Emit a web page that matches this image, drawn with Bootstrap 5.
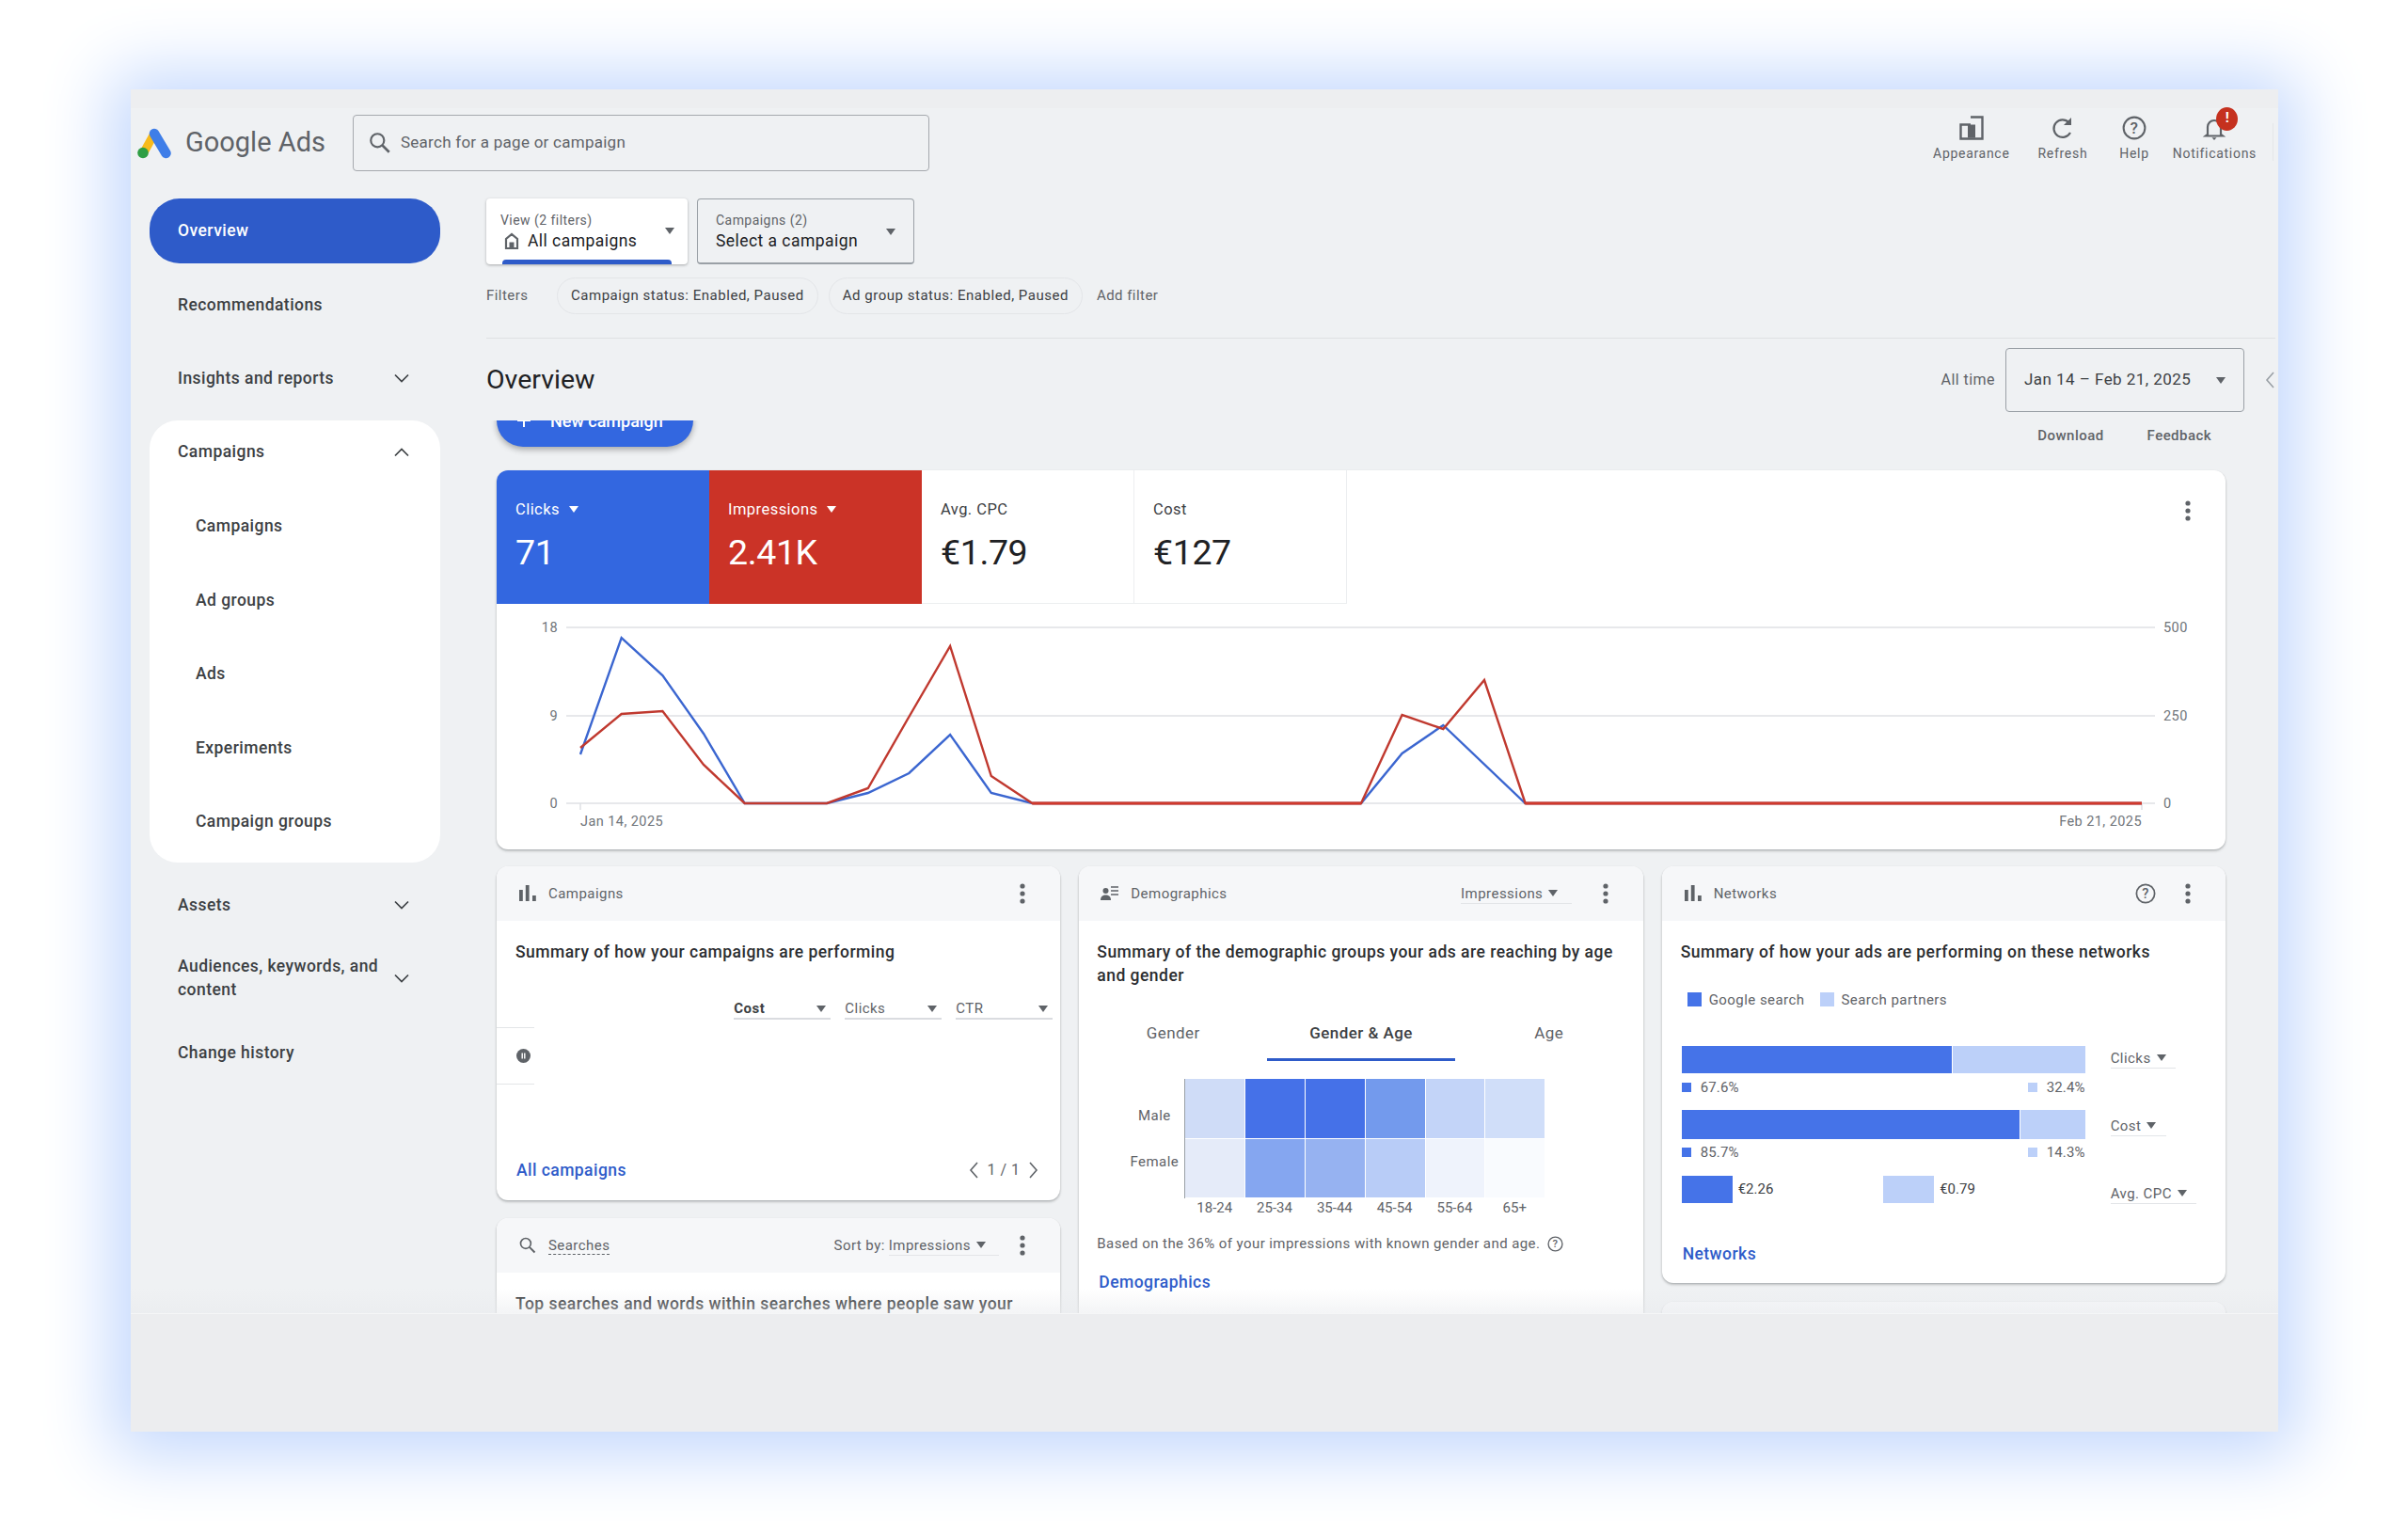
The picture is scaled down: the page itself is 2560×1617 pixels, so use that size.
<!DOCTYPE html>
<html lang="en">
<head>
<meta charset="utf-8">
<title>Google Ads Overview</title>
<link href="https://cdn.jsdelivr.net/npm/bootstrap@5.3.0/dist/css/bootstrap.min.css" rel="stylesheet">
<style>
html,body{margin:0;background:#fff;width:2560px;height:1617px;overflow:hidden}
body{font-family:Roboto,"Liberation Sans",sans-serif;color:#3c4043;letter-spacing:.03em;font-size:15px}
.gframe{width:2283px;height:1427px;margin:95px 0 0 139px;background:#eff1f3;box-shadow:0 4px 70px 20px #c2d7fd;display:flex;flex-direction:column;overflow:hidden}
.gupper{height:1301px;display:flex;flex-direction:column;position:relative;overflow:hidden}
.glower{height:126px;background:#ecedef;border-top:1px solid #f5f6f7}
.gband{height:20px;background:#edeef0;flex:none}
.ghead{height:92px;flex:none;padding:7px 0 0 7px}
.gheadrow{height:60px}
.glogo{width:36px;height:33px}
.gbrand{font-size:29px;color:#5f6368;margin-left:15px;width:178px;letter-spacing:0}
.gsearch{width:613px;height:60px;border:1px solid #a6a9ae;border-radius:4px;padding-left:15px;color:#5f6368;font-size:17px;letter-spacing:.015em}
.gsearch svg{width:26px;height:26px;margin-right:9px}
.gtools{padding-right:5px;align-self:flex-start;margin-top:1px}
.gtool{position:relative;font-size:14px;color:#5f6368;line-height:20px;text-align:center;white-space:nowrap;letter-spacing:.05em}
.gtool svg{display:block;width:26px;height:26px;margin:0 auto 4px}
.gbadge{position:absolute;left:50%;top:-9px;margin-left:2px;width:23px;height:25px;border-radius:50%;background:#c5311f;color:#fff;font-size:15px;font-weight:700;line-height:23px;letter-spacing:0}
.gsep{width:1px;height:40px;background:#e4e6e8;margin-left:17px;margin-top:8px}
.gcols{height:1189px;flex:none}
.gside{width:378px;flex:none;padding:0 49px 0 20px;margin-top:-1px}
.navln{height:78.5px;padding:0 30px;display:flex;align-items:center;justify-content:space-between;font-size:17.5px;font-weight:500;color:#3c4043}
.navln svg{width:20px;height:20px;flex:none;margin-right:1px}
.navact{height:69px;margin:4.75px 0;background:#2e5bc9;color:#fff;border-radius:32px}
.navgroup{background:#fff;border-radius:30px;margin:5px 0 5.5px;padding-bottom:4.5px}
.navtop{height:68px;margin-bottom:5.5px}
.navsub{padding-left:49px}
.navtwo{line-height:25px}
.gmain{width:1905px;flex:none;display:flex;flex-direction:column;min-height:0}
.gpick{height:70px;padding:12px 14px 0 15px;position:relative;font-size:17.5px;color:#202124;line-height:22px;flex:none}
.gpick small{display:block;font-size:14px;color:#5f6368;line-height:22px}
.gpick1{width:214px;background:#fff;border-radius:4px;box-shadow:0 1px 3px rgba(0,0,0,.3)}
.gpick1:after{content:"";position:absolute;left:17px;right:17px;bottom:0;height:5px;background:#2e5bc9;border-radius:4px 4px 0 0}
.gpick1 svg{margin-left:3px}
.gpick2{width:231px;border:1px solid #9aa0a6;border-bottom-width:2px;border-radius:4px;padding-left:19px;padding-top:11px}
.gpicks{margin-top:4px;gap:10px}
.gpick .tridn{position:absolute;right:14px;top:31px}
.gpick2 .tridn{right:19px!important}
.tridn{display:inline-block;width:0;height:0;border-left:5.5px solid transparent;border-right:5.5px solid transparent;border-top:7px solid #5f6368;flex:none}
.gfilters{height:39px;margin-top:14px;font-size:15px;color:#5f6368;gap:11px;flex:none}
.gchip{height:39px;padding:0 14px;display:flex;align-items:center;border:1px solid #e3e5e8;border-radius:20px;color:#3c4043;white-space:nowrap;letter-spacing:.035em}
.gfilters .gfl{width:64px}
.gaddf{margin-left:4px}
.gdiv{height:1px;background:#dfe1e4;margin-top:25px;width:1902px;flex:none}
.gtitle{height:87px;padding-top:10px;flex:none}
.gtitle h1{font-size:28.5px;font-weight:400;color:#202124;margin:0;line-height:68px;letter-spacing:0}
.galltime{font-size:16px;color:#5f6368;margin-right:11px;line-height:68px}
.gdate{width:254px;height:68px;border:1px solid #9aa0a6;border-radius:4px;padding:0 19px;font-size:17px;color:#3c4043}
.gcoll{width:36px;height:68px;padding-left:20px}
.gcoll svg{width:14px;height:20px}
.gscroll{flex:1;min-height:0;overflow:hidden;padding:0 56px 0 11px}
.gact{height:53px;flex:none}
.gnewbtn{width:209px;height:56px;margin-top:-28px;border-radius:28px;background:#3367e0;color:#fff;border:0;font-size:18px;font-weight:500;box-shadow:0 3px 6px rgba(0,0,0,.3);padding:0 0 0 22px;display:flex;align-items:center;gap:21px}
.glinks{padding:6px 15px 0 0;gap:46px;font-size:15px;line-height:20px;color:#5f6368;font-weight:500}
.gcard{border:0;border-radius:12px;box-shadow:0 1px 2px rgba(60,64,67,.22),0 2px 3px rgba(60,64,67,.2);overflow:hidden;background:#fff}
.gchart{height:403px;margin-bottom:18px}
.gtile{width:226px;height:142px;padding:32px 0 0 20px;font-size:16.5px;line-height:20px;color:#3c4043;border-right:1px solid #eceef0;border-bottom:1px solid #eceef0}
.gtile b{display:block;font-weight:400;font-size:37.5px;line-height:46px;margin-top:12px;color:#202124;letter-spacing:-.01em}
.gtblue{background:#3367e0;color:#fff;border:0}
.gtred{background:#cb3327;color:#fff;border:0}
.gtblue b,.gtred b{color:#fff}
.gtile .tridn{border-top-color:#fff;margin-left:10px;vertical-align:2px}
.gdots{width:6px;height:24px;flex:none;color:#5f6368}
.gtopdots{margin:31px 37px 0 auto}
.gsvg{display:block}
.gsvg text{font-family:Roboto,"Liberation Sans",sans-serif;font-size:14.5px;fill:#70757a;letter-spacing:.03em}
.gtri{gap:20px}
.gcolm{flex:1 1 0;min-width:0}
.card-header.ghd{height:58px;background:#f6f7f9;border:0;padding:0 37px 0 23px;display:flex;align-items:center;font-size:15px;color:#5f6368;border-radius:0}
.ghd .gic{width:20px;height:20px;margin-right:12px;flex:none}
.gsumm{font-size:17.5px;line-height:25px;font-weight:500;color:#2b2d30;padding:21px 15px 0 20px;letter-spacing:.027em}
.gsel{justify-content:flex-end;gap:15px;padding-right:8px;margin-top:38px;font-size:15px}
.gsel>div{width:103px;height:21px;border-bottom:2px solid #dadce0;display:flex;justify-content:space-between;align-items:center;padding-right:5px;color:#5f6368}
.gsel>div.on{font-weight:700;color:#3c4043}
.gcamprow{width:40px;height:61px;border-top:1px solid #e3e5e8;border-bottom:1px solid #e3e5e8;margin-top:8px;display:flex;align-items:center;padding-left:21px}
.gcamprow svg{width:15px;height:15px}
.gfoot{margin-top:auto;padding:0 22px 20px 21px;line-height:24px}
.glink{font-size:17.5px;font-weight:500;color:#2e5bc9;text-decoration:none}
.gpager{font-size:16px;color:#5f6368;gap:9px}
.gpager svg{width:12px;height:20px}
.gcamps{height:355px}
.gsearches{height:120px;margin-top:19px}
.gdash{border-bottom:1px dashed #5f6368;line-height:18px}
.gddl{height:22px;border-bottom:1px solid #e3e5e8;display:inline-flex;align-items:center;gap:6px;color:#5f6368;font-size:15px;line-height:20px;white-space:nowrap}
.gdemo{height:490px}
.gtabbar{margin-top:20px;height:58px}
.gtabbar>div{flex:1 1 0;text-align:center;font-size:17px;padding-top:16px;line-height:24px;color:#5f6368;border-bottom:3px solid transparent}
.gtabbar>div.on{border-bottom-color:#2e5bc9;color:#3c4043;font-weight:500}
.gheat{margin-top:19px}
.gylab{margin-left:48px;width:64px;text-align:center;font-size:15px;line-height:20px;color:#5f6368;flex:none}
.gylab div{margin-top:29px}
.gcells{display:grid;grid-template-columns:repeat(6,63.8px);grid-template-rows:63.5px 63.5px;border-left:1px solid #9aa0a6}
.gcells div{border:solid #fff;border-width:0 1px 1px 0}
.gxlab{display:grid;grid-template-columns:repeat(6,63.8px);margin-left:112px;font-size:15px;line-height:20px;text-align:center;color:#5f6368;letter-spacing:0}
.gnote{margin:18px 0 0 19px;font-size:15px;line-height:20px;color:#5f6368;display:flex;align-items:center;gap:8px;white-space:nowrap;letter-spacing:.028em}
.gnote svg{width:17px;height:17px}
.gdlink{margin:19px 0 0 21px;line-height:24px}
.gnets{height:443px}
.gnext{height:70px;margin-top:20px}
.glegend{margin:28px 0 0 27px;height:20px;font-size:15px;color:#5f6368;line-height:20px}
.gsq{display:inline-block;width:15px;height:15px;background:#4573e8;margin-right:8px;vertical-align:-2px}
.gsq2{background:#bcd0f9}
.glegend span+span{margin-left:16px}
.gbars{padding:0 0 0 21px;margin-top:39px}
.gbarsl{width:429px;flex:none}
.gstack{display:flex}
.gstack div:first-child{background:#4573e8}
.gstack div:last-child{background:#bcd0f9;flex:1;margin-left:1px}
.gpcts{display:flex;justify-content:space-between;font-size:15px;line-height:20px;color:#5f6368;letter-spacing:.01em}
.gmini{display:inline-block;width:10px;height:10px;background:#4573e8;margin-right:10px}
.gmini2{background:#bcd0f9}
.gddr{margin-left:27px}
.gcpc{flex:1 1 0;display:flex;align-items:center;gap:6px;font-size:15px;color:#3c4043;letter-spacing:0}
.gcpc i{display:block;width:54px;height:29px;background:#4573e8}
.gcpc i.gl{background:#bcd0f9}
.gnlink{margin:41px 0 0 22px;line-height:24px}
.gveil{position:absolute;left:0;right:0;bottom:0;height:26px;background:linear-gradient(rgba(232,234,237,0),rgba(232,234,237,.5));pointer-events:none}
</style>
</head>
<body>
<svg class="d-none" xmlns="http://www.w3.org/2000/svg">
<symbol id="i-search" viewBox="0 0 24 24"><circle cx="9.5" cy="9.5" r="6.5" fill="none" stroke="currentColor" stroke-width="2"/><path d="M14.3 14.3 21 21" stroke="currentColor" stroke-width="2.4" fill="none"/></symbol>
<symbol id="i-dots" viewBox="0 0 6 24"><circle cx="3" cy="4" r="2.6" fill="currentColor"/><circle cx="3" cy="12" r="2.6" fill="currentColor"/><circle cx="3" cy="20" r="2.6" fill="currentColor"/></symbol>
<symbol id="i-bars" viewBox="0 0 20 20"><path d="M1 6h3.800v12H1zM7.800 1h3.800v17H7.800zM15 12h3.800v6H15z" fill="currentColor"/></symbol>
<symbol id="i-dn" viewBox="0 0 20 20"><path d="M3 6.5l7 7 7-7" fill="none" stroke="currentColor" stroke-width="1.7"/></symbol>
<symbol id="i-up" viewBox="0 0 20 20"><path d="M3 13.5l7-7 7 7" fill="none" stroke="currentColor" stroke-width="1.7"/></symbol>
<symbol id="i-help" viewBox="0 0 24 24"><circle cx="12" cy="12" r="10.5" fill="none" stroke="currentColor" stroke-width="1.9"/><text x="12" y="17.6" text-anchor="middle" font-family="Roboto,sans-serif" font-size="16" font-weight="500" fill="currentColor">?</text></symbol>
<symbol id="i-lt" viewBox="0 0 12 20"><path d="M10 2 3 10l7 8" fill="none" stroke="currentColor" stroke-width="1.6"/></symbol>
<symbol id="i-rt" viewBox="0 0 12 20"><path d="M2 2l7 8-7 8" fill="none" stroke="currentColor" stroke-width="1.6"/></symbol>
</svg>

<div class="gframe">
 <div class="gupper">
  <div class="gband"></div>
  <header class="ghead">
   <div class="d-flex align-items-center gheadrow">
    <svg class="glogo" viewBox="0 0 36 33"><path d="M18 6 7 26" stroke="#f8bb1c" stroke-width="9" stroke-linecap="round" fill="none"/><path d="M18 6 30.500 27" stroke="#3f7ee8" stroke-width="10.500" stroke-linecap="round" fill="none"/><circle cx="6" cy="26.500" r="5.800" fill="#2f9e44"/></svg>
    <span class="gbrand">Google Ads</span>
    <div class="gsearch d-flex align-items-center"><svg><use href="#i-search"/></svg>Search for a page or campaign</div>
    <div class="ms-auto d-flex gtools">
     <div class="gtool"><svg viewBox="0 0 26 26"><path d="M12 1.500h12.500v23H1.500V9.500H12" fill="none" stroke="#5f6368" stroke-width="2.400"/><path d="M9 9.500h8v14H9z" fill="#5f6368"/></svg>Appearance</div>
     <div class="gtool" style="margin-left:30px"><svg viewBox="0 0 26 26"><path d="M19.500 7.200A9.300 9.300 0 1 0 21 18" fill="none" stroke="#5f6368" stroke-width="2.200"/><path d="M22 2v8h-8z" fill="#5f6368"/></svg>Refresh</div>
     <div class="gtool" style="margin-left:34px"><svg><use href="#i-help"/></svg>Help</div>
     <div class="gtool" style="margin-left:25px"><svg viewBox="0 0 26 26"><path d="M6 20V12a7 7 0 0 1 14 0v8l2 1.500H4z" fill="none" stroke="#5f6368" stroke-width="2.200"/><path d="M10.500 23.200h5L13 26z" fill="#5f6368"/></svg><span class="gbadge">!</span>Notifications</div>
     <div class="gsep"></div>
    </div>
   </div>
  </header>
  <div class="d-flex gcols">
   <nav class="gside">
    <div class="navln navact">Overview</div>
    <div class="navln">Recommendations</div>
    <div class="navln">Insights and reports<svg><use href="#i-dn"/></svg></div>
    <div class="navgroup">
     <div class="navln navtop">Campaigns<svg><use href="#i-up"/></svg></div>
     <div class="navln navsub">Campaigns</div>
     <div class="navln navsub">Ad groups</div>
     <div class="navln navsub">Ads</div>
     <div class="navln navsub">Experiments</div>
     <div class="navln navsub">Campaign groups</div>
    </div>
    <div class="navln">Assets<svg><use href="#i-dn"/></svg></div>
    <div class="navln navtwo"><span>Audiences, keywords, and<br>content</span><svg><use href="#i-dn"/></svg></div>
    <div class="navln">Change history</div>
   </nav>
   <main class="gmain">
    <div class="d-flex gpicks">
     <div class="gpick gpick1"><small>View (2 filters)</small><span class="d-flex align-items-center gap-2"><svg width="18" height="22" viewBox="-1 -2 18 22"><path d="M2 17V7l6-5 6 5v10z" fill="none" stroke="#5f6368" stroke-width="2.200"/><path d="M5.500 10.500h5V17h-5z" fill="#5f6368"/></svg>All campaigns</span><span class="tridn"></span></div>
     <div class="gpick gpick2"><small>Campaigns (2)</small>Select a campaign<span class="tridn"></span></div>
    </div>
    <div class="d-flex align-items-center gfilters">
     <span class="gfl">Filters</span>
     <span class="gchip">Campaign status: Enabled, Paused</span>
     <span class="gchip">Ad group status: Enabled, Paused</span>
     <span class="gaddf">Add filter</span>
    </div>
    <div class="gdiv"></div>
    <div class="d-flex gtitle">
     <h1>Overview</h1>
     <span class="galltime ms-auto">All time</span>
     <div class="gdate d-flex align-items-center justify-content-between">Jan 14 – Feb 21, 2025<span class="tridn"></span></div>
     <div class="gcoll d-flex align-items-center"><svg style="color:#9aa0a6"><use href="#i-lt"/></svg></div>
    </div>
    <div class="gscroll">
     <div class="d-flex justify-content-between gact">
      <button class="gnewbtn"><svg width="14" height="14" viewBox="0 0 14 14"><path d="M7 0v14M0 7h14" stroke="#fff" stroke-width="2"/></svg>New campaign</button>
      <div class="d-flex glinks"><span>Download</span><span>Feedback</span></div>
     </div>
     <section class="card gcard gchart">
      <div class="d-flex">
       <div class="gtile gtblue">Clicks<span class="tridn"></span><b>71</b></div>
       <div class="gtile gtred">Impressions<span class="tridn"></span><b>2.41K</b></div>
       <div class="gtile">Avg. CPC<b>€1.79</b></div>
       <div class="gtile">Cost<b>€127</b></div>
       <svg class="gdots gtopdots"><use href="#i-dots"/></svg>
      </div>
      <svg class="gsvg" width="1838" height="261" viewBox="0 0 1838 261">
       <g stroke="#dfe1e5" stroke-width="1.5"><path d="M74 25H1763M74 119H1763M74 212H1763M89 212v7M1749 212v7"/></g>
       <text x="65" y="30" text-anchor="end">18</text><text x="65" y="124" text-anchor="end">9</text><text x="65" y="217" text-anchor="end">0</text>
       <text x="1772" y="30">500</text><text x="1772" y="124">250</text><text x="1772" y="217">0</text>
       <text x="89" y="236">Jan 14, 2025</text><text x="1749" y="236" text-anchor="end">Feb 21, 2025</text>
       <polyline fill="none" stroke="#3b66d0" stroke-width="2.4" points="89,160 132.7,36 176.4,76 220,138 263.7,212 351.1,212 394.8,201 438.4,180 482.1,139 525.8,201 569.5,212 919,212 962.6,159 1006.3,129 1093.6,212 1749,212"/>
       <polyline fill="none" stroke="#c0392f" stroke-width="2.4" points="89,153 132.7,117 176.4,114 220,171 263.7,212 351.1,212 394.8,196 438.4,120 482.1,45 525.8,183 569.5,212 919,212 962.6,118 1006.3,133 1050,81 1093.6,212 1749,212"/>
       <path d="M569.5 212H919M1093.6 212H1749" stroke="#d0392c" stroke-width="3"/>
      </svg>
     </section>
     <div class="d-flex gtri">
      <div class="gcolm">
       <section class="card gcard gcamps">
        <div class="card-header ghd"><svg class="gic"><use href="#i-bars"/></svg>Campaigns<svg class="gdots ms-auto"><use href="#i-dots"/></svg></div>
        <div class="gsumm">Summary of how your campaigns are performing</div>
        <div class="d-flex gsel"><div class="on">Cost<span class="tridn"></span></div><div>Clicks<span class="tridn"></span></div><div>CTR<span class="tridn"></span></div></div>
        <div class="gcamprow"><svg viewBox="0 0 15 15"><circle cx="7.5" cy="7.5" r="7.5" fill="#5f6368"/><path d="M5.5 4.5h1.4v6H5.5zM8.1 4.5h1.4v6H8.1z" fill="#fff"/></svg></div>
        <div class="d-flex justify-content-between align-items-center gfoot"><a class="glink" href="#">All campaigns</a><span class="d-flex align-items-center gpager"><svg><use href="#i-lt"/></svg>1 / 1<svg><use href="#i-rt"/></svg></span></div>
       </section>
       <section class="card gcard gsearches">
        <div class="card-header ghd"><svg class="gic"><use href="#i-search"/></svg><span class="gdash">Searches</span><span class="ms-auto me-1">Sort by:</span><span class="gddl" style="margin-right:22px">Impressions <span class="tridn"></span>&nbsp;&nbsp;</span><svg class="gdots"><use href="#i-dots"/></svg></div>
        <div class="gsumm" style="white-space:nowrap">Top searches and words within searches where people saw your</div>
       </section>
      </div>
      <div class="gcolm">
       <section class="card gcard gdemo">
        <div class="card-header ghd"><svg class="gic" viewBox="0 0 20 20"><circle cx="5.5" cy="7" r="3" fill="#5f6368"/><path d="M0 17c0-4 2.500-5.500 5.500-5.500S11 13 11 17z" fill="#5f6368"/><path d="M11 3h8M11 7h8M11 11h8" stroke="#5f6368" stroke-width="1.6"/></svg>Demographics<span class="gddl ms-auto" style="margin-right:33px">Impressions <span class="tridn"></span>&nbsp;&nbsp;</span><svg class="gdots"><use href="#i-dots"/></svg></div>
        <div class="gsumm" style="padding-left:19px;padding-right:5px;white-space:nowrap">Summary of the demographic groups your ads are reaching by age<br>and gender</div>
        <div class="d-flex gtabbar"><div>Gender</div><div class="on">Gender &amp; Age</div><div>Age</div></div>
        <div class="d-flex gheat">
         <div class="gylab"><div>Male</div><div>Female</div></div>
         <div class="gcells">
          <div style="background:#cfdcf7"></div><div style="background:#4571e8"></div><div style="background:#4571e8"></div><div style="background:#739aed"></div><div style="background:#c3d4f8"></div><div style="background:#d0def9"></div>
          <div style="background:#e5ebf9"></div><div style="background:#85a6f0"></div><div style="background:#96b2f1"></div><div style="background:#b8ccf7"></div><div style="background:#eff3fc"></div><div style="background:#f9fbfe"></div>
         </div>
        </div>
        <div class="gxlab"><span>18-24</span><span>25-34</span><span>35-44</span><span>45-54</span><span>55-64</span><span>65+</span></div>
        <div class="gnote">Based on the 36% of your impressions with known gender and age.<svg><use href="#i-help"/></svg></div>
        <div class="gdlink"><a class="glink" href="#">Demographics</a></div>
       </section>
      </div>
      <div class="gcolm">
       <section class="card gcard gnets">
        <div class="card-header ghd"><svg class="gic"><use href="#i-bars"/></svg>Networks<svg class="ms-auto" width="22" height="22" style="margin-right:31px"><use href="#i-help"/></svg><svg class="gdots"><use href="#i-dots"/></svg></div>
        <div class="gsumm">Summary of how your ads are performing on these networks</div>
        <div class="glegend"><span><i class="gsq"></i>Google search</span><span><i class="gsq gsq2"></i>Search partners</span></div>
        <div class="d-flex gbars"><div class="gbarsl">
          <div class="gstack" style="height:29px"><div style="width:66.9%"></div><div></div></div>
          <div class="gpcts" style="margin:5px 0 14px"><span class="d-flex align-items-center"><i class="gmini"></i>67.6%</span><span class="d-flex align-items-center"><i class="gmini gmini2"></i>32.4%</span></div>
          <div class="gstack" style="height:31px"><div style="width:83.8%"></div><div></div></div>
          <div class="gpcts" style="margin:4px 0 15px"><span class="d-flex align-items-center"><i class="gmini"></i>85.7%</span><span class="d-flex align-items-center"><i class="gmini gmini2"></i>14.3%</span></div>
          <div class="d-flex"><div class="gcpc"><i></i>€2.26</div><div class="gcpc"><i class="gl"></i>€0.79</div></div>
         </div>
         <div class="gddr d-flex flex-column align-items-start">
          <span class="gddl" style="margin-top:2px">Clicks <span class="tridn"></span>&nbsp;</span>
          <span class="gddl" style="margin-top:50px">Cost <span class="tridn"></span>&nbsp;</span>
          <span class="gddl" style="margin-top:50px">Avg. CPC <span class="tridn"></span>&nbsp;</span>
         </div>
        </div>
        <div class="gnlink"><a class="glink" href="#">Networks</a></div>
       </section>
       <section class="card gcard gnext"><div class="card-header ghd"></div></section>
      </div>
     </div>
    </div>
   </main>
  </div>
  <div class="gveil"></div>
 </div>
 <div class="glower"></div>
</div>
<script src="https://cdn.jsdelivr.net/npm/bootstrap@5.3.0/dist/js/bootstrap.bundle.min.js"></script>
</body>
</html>
